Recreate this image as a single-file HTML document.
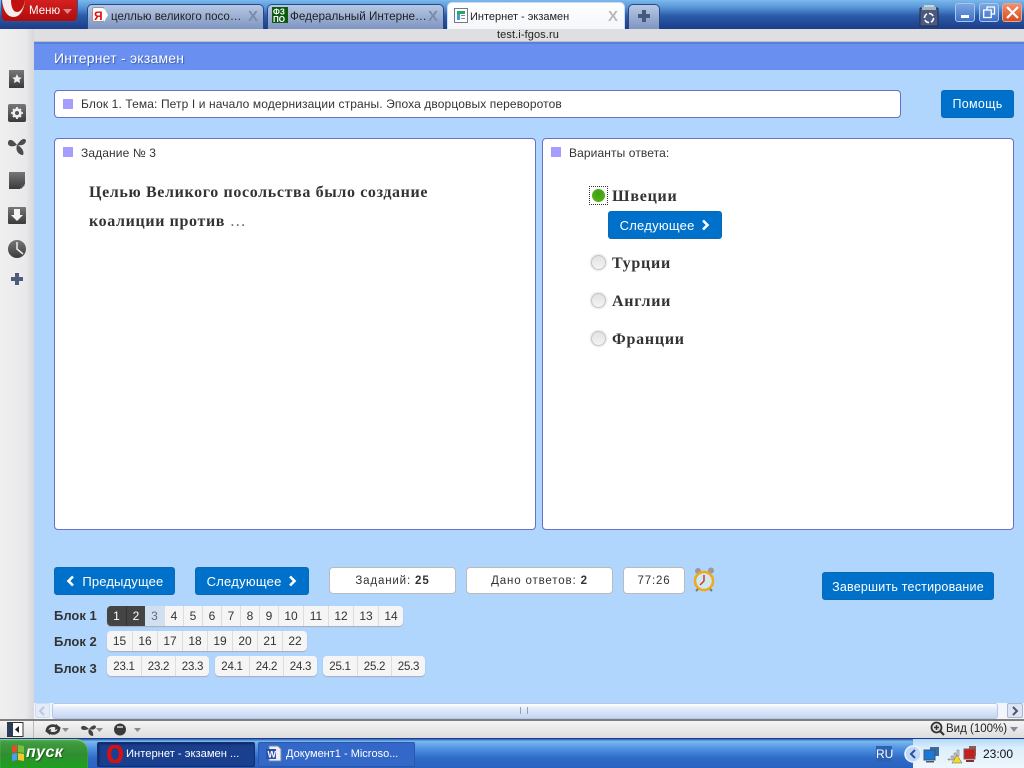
<!DOCTYPE html>
<html lang="ru"><head><meta charset="utf-8"><title>Интернет - экзамен</title>
<style>
*{box-sizing:border-box}
html,body{margin:0;padding:0;width:1024px;height:768px;overflow:hidden;background:#b0d6fe;font-family:"Liberation Sans",sans-serif;color:#333}
.a{position:absolute}
.t{position:absolute;white-space:nowrap}
.tab{position:absolute;top:4px;height:25px;border:1px solid #24488c;border-bottom:0;border-radius:5px 5px 0 0;background:linear-gradient(#b6c8e2,#7f95c2);font-size:12px;color:#222;line-height:24px}
.x{position:absolute;top:3px;font:bold 15px/18px "Liberation Sans",sans-serif;color:#7c8aa8}
.box{position:absolute;background:#fff;border:1px solid #6a6fc8;border-radius:4px}
.sq{position:absolute;width:10px;height:10px;background:#a59eff}
.lbl{position:absolute;font-size:12px;line-height:14px;color:#333;white-space:nowrap;letter-spacing:.11px}
.btn{position:absolute;background:#0071ca;border:1px solid #0a68b4;border-radius:3px;color:#fff;font-size:13px;text-align:center;white-space:nowrap;letter-spacing:.3px}
.info{position:absolute;top:567px;height:27px;background:#fff;border:1px solid #bbb;border-radius:4px;font-size:11.5px;line-height:26px;text-align:center;letter-spacing:.85px;color:#333}
.info b{letter-spacing:.9px}
.opt{position:absolute;font:bold 16px/20px "Liberation Serif",serif;color:#333;left:612px;white-space:nowrap;letter-spacing:.75px}
.rad{position:absolute;left:591px;width:15px;height:15px;border-radius:50%;background:linear-gradient(#e2e2e2,#f4f4f4);border:1px solid #c4c4c4;box-shadow:0 0 0 1.5px #efefef}
.pg{position:absolute;height:20px;display:flex;border-radius:4px;background:#f5f5f5;box-shadow:0 1px 1px #aab;overflow:hidden;font-size:12px;line-height:21px;text-align:center;color:#333}
.pg span{display:block;border-left:1px solid #ddd;flex:none}
.pg span:first-child{border-left:0}
.r3{font-size:11.5px;letter-spacing:-.25px;line-height:22px}
.bl{position:absolute;left:54px;font-size:13px;font-weight:bold;line-height:16px;color:#333;white-space:nowrap}
.win{position:absolute;top:3px;width:20px;height:19px;border:1px solid #a8c8ee;border-radius:3px;background:linear-gradient(#7da6e0,#3f70c8)}
</style></head><body>

<!-- top chrome -->
<div class="a" style="left:0;top:0;width:1024px;height:29px;background:linear-gradient(#7ab8ec 0,#5d9bdc 22%,#2a5ba8 55%,#1d3c88 100%)"></div>
<div class="a" style="left:1px;top:0;width:77px;height:22px;background:linear-gradient(#d42020,#b00c0c);border:1px solid #31528e;border-top:0;border-radius:0 0 5px 5px"></div>
<svg class="a" style="left:2px;top:0" width="26" height="18" viewBox="0 0 26 18"><path d="M0 0H23C22 10 18 17 11.500 17C5 17 1 10 0 0Z" fill="#f4eeee"/><path d="M9 0C9 7 11 12 15 12C19 12 22 7 23 0Z" fill="#c01010"/></svg>
<div class="t" style="left:29px;top:4px;font-size:11.5px;line-height:14px;color:#fff">Меню</div>
<svg class="a" style="left:63px;top:9px" width="10" height="6"><path d="M0 0H9L4.500 5Z" fill="#d88a8a"/></svg>

<div class="tab" style="left:87px;width:177px;font-size:11.5px"><span class="t" style="left:23px;top:0">целлью великого посо…</span><span class="x" style="left:160px">X</span></div>
<svg class="a" style="left:92px;top:7px" width="16" height="16"><rect x=".5" y=".5" width="12" height="14" rx="2" fill="#fff" stroke="#999"/><path d="M12 1L16 8L12 15Z" fill="#fff"/><text x="2" y="13" font-family="Liberation Sans" font-size="12" font-weight="bold" fill="#e01010">Я</text></svg>
<div class="tab" style="left:267px;width:177px;font-size:11.7px"><span class="t" style="left:22px;top:0">Федеральный Интерне…</span><span class="x" style="left:160px">X</span></div>
<svg class="a" style="left:272px;top:7px" width="16" height="16"><rect width="16" height="16" fill="#0c5a12"/><text x="1" y="7.500" font-family="Liberation Sans" font-size="8" font-weight="bold" fill="#fff">ФЗ</text><text x="1" y="15" font-family="Liberation Sans" font-size="8" font-weight="bold" fill="#fff">ПО</text></svg>
<div class="tab" style="left:447px;top:2px;width:178px;height:27px;background:linear-gradient(#fff,#f4f6fa);border-color:#d0dcef;font-size:11px"><span class="t" style="left:22px;top:2px">Интернет - экзамен</span><span class="x" style="left:160px;top:5px;color:#b8b8b8">X</span></div>
<svg class="a" style="left:454px;top:8px" width="14" height="15"><rect x=".5" y=".5" width="13" height="14" fill="#fff" stroke="#778"/><rect x="3" y="3" width="8" height="3" fill="#2aa860"/><rect x="3" y="6" width="3" height="6" fill="#3aa0d8"/><rect x="7" y="7" width="4" height="1" fill="#888"/><rect x="7" y="10" width="4" height="1" fill="#888"/></svg>
<div class="tab" style="left:628px;width:32px"></div>
<svg class="a" style="left:637px;top:9px" width="14" height="14"><path d="M5 1H9V5H13V9H9V13H5V9H1V5H5Z" fill="#465a80"/></svg>

<svg class="a" style="left:919px;top:4px" width="20" height="23"><path d="M5 1H15L16 6H5Z" fill="#b8e0d0"/><rect x="1" y="4" width="18" height="18" rx="1" fill="#4a5a80" stroke="#222c48"/><rect x="3" y="3" width="14" height="3" fill="#a8b0c0"/><circle cx="10" cy="14" r="4.500" fill="none" stroke="#fff" stroke-width="1.600" stroke-dasharray="5 2"/></svg>
<div class="win" style="left:955px"><div class="a" style="left:5px;top:11px;width:8px;height:3px;background:#fff"></div></div>
<div class="win" style="left:979px"><svg class="a" style="left:3px;top:2px" width="13" height="13" fill="none" stroke="#fff" stroke-width="1.300"><rect x=".7" y="4" width="7.500" height="7.500"/><path d="M4 4V1H11.500V8H8.500"/></svg></div>
<div class="win" style="left:1002px;width:20px;border-color:#e8a890;background:linear-gradient(#ee9070,#d84c20)"><svg class="a" style="left:3px;top:2px" width="13" height="13"><path d="M1 1L12 12M12 1L1 12" stroke="#fff" stroke-width="2.200"/></svg></div>

<!-- sidebar -->
<div class="a" style="left:0;top:29px;width:34px;height:691px;background:linear-gradient(90deg,#efeff0 0,#e9e9eb 75%,#d8d8da 100%)"></div>
<svg class="a" style="left:0;top:65px" width="34" height="225" viewBox="0 0 34 225">
<defs><linearGradient id="g" x1="0" y1="0" x2="0" y2="1"><stop offset="0" stop-color="#777"/><stop offset="1" stop-color="#3a3a3a"/></linearGradient></defs>
<rect x="9" y="5" width="15" height="18" fill="url(#g)"/><path d="M17 9l1.500 3.200 3.300.4-2.400 2.200.7 3.300-3.100-1.700-3.100 1.700.7-3.300-2.400-2.200 3.300-.4z" fill="#eee"/>
<rect x="8" y="39" width="18" height="18" rx="2" fill="url(#g)"/><circle cx="17" cy="48" r="3.500" fill="none" stroke="#eee" stroke-width="2.500"/><path d="M17 42V54M11 48H23M13 44L21 52M21 44L13 52" stroke="#eee" stroke-width="1.800"/><circle cx="17" cy="48" r="2" fill="#555"/>
<path d="M17 80C11 72 8 75 8 78C8 82 13 82 17 80ZM17 80C23 71 26 74 26 76C25 80 21 81 17 80ZM17 80C15 86 19 90 23 90C25 87 21 81 17 80Z" fill="#4c4c4c"/>
<path d="M9 107H25V119L20 124H9Z" fill="url(#g)"/><path d="M21 120H25L21 124Z" fill="#555"/>
<rect x="8" y="142" width="18" height="17" rx="1" fill="url(#g)"/><path d="M14 144H20V150H23L17 156L11 150H14Z" fill="#f2f2f2"/>
<circle cx="17" cy="184" r="9" fill="url(#g)"/><path d="M17 177V184L23 189" stroke="#eee" stroke-width="1.500" fill="none"/>
<path d="M15 208H19V212H23V216H19V220H15V216H11V212H15Z" fill="#4e5c7c"/>
</svg>

<!-- address strip -->
<div class="a" style="left:34px;top:29px;width:990px;height:13px;background:#dfdfe1;border-bottom:1px solid #bfc0c4"></div>
<div class="t" style="left:497px;top:29px;font-size:11px;line-height:12px;color:#222;letter-spacing:.1px">test.i-fgos.ru</div>
<!-- page header -->
<div class="a" style="left:34px;top:42px;width:990px;height:28px;background:#6990f0;border-top:2px solid #5a80de"></div>
<div class="t" style="left:54px;top:50px;font-size:14px;line-height:16px;color:#fff;letter-spacing:.22px;text-shadow:1px 1px 1px #3a5cb0">Интернет - экзамен</div>
<!-- body -->
<div class="a" style="left:34px;top:70px;width:990px;height:650px;background:#b0d6fe"></div>

<div class="box" style="left:54px;top:90px;width:847px;height:28px"></div>
<div class="sq" style="left:63px;top:99px"></div>
<div class="lbl" style="left:81px;top:97px">Блок 1. Тема: Петр I и начало модернизации страны. Эпоха дворцовых переворотов</div>
<div class="btn" style="left:941px;top:90px;width:73px;height:28px;line-height:27px;font-size:12.500px">Помощь</div>

<div class="box" style="left:54px;top:138px;width:482px;height:392px"></div>
<div class="sq" style="left:63px;top:147px"></div>
<div class="lbl" style="left:81px;top:146px">Задание № 3</div>
<div class="t" style="left:89px;top:178px;width:400px;font:bold 16px/29px 'Liberation Serif',serif;color:#333;letter-spacing:.63px">Целью Великого посольства было создание<br>коалиции против <span style="font-weight:normal;color:#666">…</span></div>

<div class="box" style="left:542px;top:138px;width:472px;height:392px"></div>
<div class="sq" style="left:551px;top:147px"></div>
<div class="lbl" style="left:569px;top:146px">Варианты ответа:</div>

<div class="a" style="left:589px;top:186px;width:19px;height:19px;border:1px dotted #333"></div>
<div class="a" style="left:592px;top:189px;width:13px;height:13px;border-radius:50%;background:radial-gradient(circle at 50% 35%,#3aa010,#5fb820)"></div>
<div class="opt" style="top:187px">Швеции</div>
<div class="btn" style="left:608px;top:211px;width:114px;height:28px;line-height:28px;letter-spacing:.25px">Следующее <svg width="9" height="12" viewBox="0 0 9 12" style="margin-left:3px;vertical-align:-1px"><path d="M2 1.500L6.500 6L2 10.500" fill="none" stroke="#fff" stroke-width="2.600"/></svg></div>
<div class="rad" style="top:255px"></div><div class="opt" style="top:254px">Турции</div>
<div class="rad" style="top:293px"></div><div class="opt" style="top:292px">Англии</div>
<div class="rad" style="top:331px"></div><div class="opt" style="top:330px">Франции</div>

<!-- bottom controls -->
<div class="btn" style="left:54px;top:567px;width:121px;height:28px;line-height:28px;letter-spacing:.15px"><svg width="9" height="12" viewBox="0 0 9 12" style="margin-right:4px;vertical-align:-1px"><path d="M7 1.500L2.500 6L7 10.500" fill="none" stroke="#fff" stroke-width="2.600"/></svg> Предыдущее</div>
<div class="btn" style="left:195px;top:567px;width:114px;height:28px;line-height:28px;letter-spacing:.25px">Следующее <svg width="9" height="12" viewBox="0 0 9 12" style="margin-left:3px;vertical-align:-1px"><path d="M2 1.500L6.500 6L2 10.500" fill="none" stroke="#fff" stroke-width="2.600"/></svg></div>
<div class="info" style="left:329px;width:127px">Заданий: <b>25</b></div>
<div class="info" style="left:466px;width:147px">Дано ответов: <b>2</b></div>
<div class="info" style="left:623px;width:62px">77:26</div>
<svg class="a" style="left:693px;top:567px" width="23" height="25" viewBox="0 0 23 25"><circle cx="5" cy="4" r="3" fill="#9a9a9a"/><circle cx="18" cy="3.500" r="3" fill="#9a9a9a"/><circle cx="11" cy="14" r="9" fill="#cdeaf4" stroke="#f4a818" stroke-width="2.600"/><path d="M11 8V14L7 18" stroke="#d03018" stroke-width="1.400" fill="none"/><path d="M5 22L3 24M17 22L19 24" stroke="#777" stroke-width="2"/></svg>
<div class="btn" style="left:822px;top:572px;width:172px;height:28px;line-height:28px;font-size:12.500px;letter-spacing:.2px">Завершить тестирование</div>

<div class="bl" style="top:608px">Блок 1</div>
<div class="bl" style="top:634px">Блок 2</div>
<div class="bl" style="top:661px">Блок 3</div>

<div class="pg" style="left:107px;top:606px">
<span style="width:19px;background:#444;color:#fff;border-color:#444">1</span><span style="width:19px;background:#444;color:#fff;border-color:#333">2</span><span style="width:19px;background:#d0e0f0;color:#667;border:0">3</span><span style="width:19px">4</span><span style="width:19px">5</span><span style="width:19px">6</span><span style="width:19px">7</span><span style="width:19px">8</span><span style="width:19px">9</span><span style="width:25px">10</span><span style="width:25px">11</span><span style="width:25px">12</span><span style="width:25px">13</span><span style="width:25px">14</span></div>
<div class="pg" style="left:107px;top:631px">
<span style="width:25px">15</span><span style="width:25px">16</span><span style="width:25px">17</span><span style="width:25px">18</span><span style="width:25px">19</span><span style="width:25px">20</span><span style="width:25px">21</span><span style="width:25px">22</span></div>
<div class="pg r3" style="left:107px;top:656px"><span style="width:34px">23.1</span><span style="width:34px">23.2</span><span style="width:34px">23.3</span></div>
<div class="pg r3" style="left:215px;top:656px"><span style="width:34px">24.1</span><span style="width:34px">24.2</span><span style="width:34px">24.3</span></div>
<div class="pg r3" style="left:323px;top:656px"><span style="width:34px">25.1</span><span style="width:34px">25.2</span><span style="width:34px">25.3</span></div>

<!-- scrollbar -->
<div class="a" style="left:34px;top:703px;width:990px;height:17px;background:#f2f6fc"></div>
<div class="a" style="left:35px;top:703px;width:15px;height:15px;background:#e4ecfa;border:1px solid #d0dcf0;border-radius:2px"></div>
<svg class="a" style="left:38px;top:706px" width="9" height="10"><path d="M6 1L2 5L6 9" fill="none" stroke="#c0c8d8" stroke-width="2"/></svg>
<div class="a" style="left:52px;top:703px;width:946px;height:16px;background:linear-gradient(#fff,#e4ecfa 30%,#c4d6f4 100%);border:1px solid #b4c8e8;border-radius:3px"></div>
<div class="t" style="left:520px;top:707px;width:8px;height:7px;border-left:1px solid #8aa;border-right:1px solid #8aa"></div>
<div class="a" style="left:1007px;top:703px;width:16px;height:15px;background:#dbe5f5;border:1px solid #a8b8d0;border-radius:2px"></div>
<svg class="a" style="left:1011px;top:706px" width="9" height="10"><path d="M2 1L6 5L2 9" fill="none" stroke="#556" stroke-width="2"/></svg>

<!-- status bar -->
<div class="a" style="left:0;top:719px;width:1024px;height:20px;background:linear-gradient(#f4f4f4,#dcdcdc);border-top:2px solid #7e7e7e"></div>
<div class="a" style="left:33px;top:721px;width:1px;height:17px;background:#bbb"></div>
<svg class="a" style="left:7px;top:722px" width="17" height="15"><rect width="16" height="14" y=".5" fill="#fff" stroke="#333"/><rect y="1" width="6" height="13" fill="#2c3c58"/><path d="M12 4L8 7.500L12 11Z" fill="#222"/></svg>
<svg class="a" style="left:44px;top:722px" width="100" height="15" viewBox="0 0 100 15">
<path d="M3 9C3 4 9 2 13 5M15 6C15 11 9 13 5 10" fill="none" stroke="#3a3a3a" stroke-width="2.600"/><path d="M12 2L17 6L11 8ZM6 13L1 9L7 7Z" fill="#3a3a3a"/><path d="M18 6H25L21.500 10Z" fill="#889"/>
<path d="M45 7C40 2 37 4 37 6C38 9 42 8 45 7ZM45 7C49 2 52 3 52 5C51 8 48 8 45 7ZM45 7C43 11 46 14 49 14C50 11 48 8 45 7Z" fill="#444"/><path d="M52 6H59L55.500 10Z" fill="#889"/>
<circle cx="76" cy="7.500" r="6" fill="#3a3a3a"/><path d="M73 5H79" stroke="#ddd" stroke-width="1.500"/><path d="M90 6H97L93.500 10Z" fill="#889"/>
</svg>
<svg class="a" style="left:930px;top:721px" width="15" height="16"><circle cx="6.500" cy="6.500" r="5" fill="#ddd" stroke="#333" stroke-width="1.800"/><path d="M4 6.500H9M6.500 4V9" stroke="#333" stroke-width="1.400"/><path d="M10 10L14 14" stroke="#333" stroke-width="2.200"/></svg>
<div class="t" style="left:946px;top:722px;font-size:11.500px;line-height:14px;color:#222">Вид (100%)</div>
<svg class="a" style="left:1010px;top:727px" width="9" height="6"><path d="M0 0H8L4 5Z" fill="#889"/></svg>

<!-- taskbar -->
<div class="a" style="left:0;top:738px;width:1024px;height:30px;background:linear-gradient(#2c5cb8 0,#78b8ee 8%,#4c90e0 35%,#2f6cc8 65%,#2a62c0 100%);border-top:1px solid #1a3c8a"></div>
<div class="a" style="left:913px;top:739px;width:111px;height:29px;background:linear-gradient(#b0d8f8,#dceefc 30%,#eef7fd 100%)"></div>
<div class="a" style="left:0;top:739px;width:88px;height:29px;background:linear-gradient(#4aa84a 0,#3c9a3c 18%,#2f8e2f 55%,#1fa01f 100%);border-radius:0 12px 0 0;box-shadow:inset 0 1px 1px #9ad09a"></div>
<svg class="a" style="left:11px;top:744px" width="14" height="18"><path d="M1 2L6 1V8L1 9Z" fill="#e84c28"/><path d="M7 1L13 2V9L7 8Z" fill="#7ac040"/><path d="M1 10L6 9V16L1 17Z" fill="#4c9cf0"/><path d="M7 9L13 10V17L7 16Z" fill="#f8c828"/></svg>
<div class="t" style="left:26px;top:744px;font:italic bold 16px/18px 'Liberation Sans',sans-serif;color:#fff;letter-spacing:.4px;text-shadow:1px 1px 1px #1a5a1a">пуск</div>
<div class="a" style="left:97px;top:742px;width:158px;height:25px;background:#1a3f8f;border:1px solid #153070;border-radius:2px;box-shadow:inset 1px 1px 2px #0e2460"></div>
<svg class="a" style="left:107px;top:745px" width="16" height="18"><ellipse cx="8" cy="9" rx="6" ry="8" fill="none" stroke="#d81010" stroke-width="4"/></svg>
<div class="t" style="left:126px;top:747px;font-size:11.200px;line-height:14px;color:#fff">Интернет - экзамен ...</div>
<div class="a" style="left:258px;top:742px;width:157px;height:25px;background:#3468c8;border:1px solid #2a56ac;border-radius:2px"></div>
<svg class="a" style="left:266px;top:745px" width="16" height="18"><path d="M3 1H12L15 4V16H3Z" fill="#eef" stroke="#789"/><rect y="4" width="10" height="10" fill="#2a50a8"/><text x="1.500" y="12.500" font-family="Liberation Sans" font-size="9" font-weight="bold" fill="#fff">W</text></svg>
<div class="t" style="left:286px;top:747px;font-size:11px;line-height:14px;color:#fff">Документ1 - Microso...</div>
<div class="a" style="left:876px;top:746px;width:16px;height:16px;background:#2c62b4"></div>
<div class="t" style="left:876px;top:747px;font-size:12px;line-height:14px;color:#fff">RU</div>
<svg class="a" style="left:904px;top:745px" width="72" height="20" viewBox="0 0 72 20">
<circle cx="9" cy="9" r="8" fill="#c0d8f4" stroke="#e8f2ff" stroke-width="1.500"/><path d="M11 5L7 9L11 13" fill="none" stroke="#2850a0" stroke-width="2"/>
<rect x="26" y="2" width="9" height="9" fill="#3c6ca8"/><rect x="20" y="5" width="11" height="10" fill="#1c78d8" stroke="#456"/><rect x="22" y="16" width="8" height="1.500" fill="#556"/>
<path d="M44 15V14H46V15ZM47 15V11H49V15ZM50 15V8H52V15ZM53 15V5H55V11H53Z" fill="#d8d8d8" stroke="#666" stroke-width=".5"/><path d="M53 10L58 18H48Z" fill="#f8d820" stroke="#664" stroke-width=".5"/>
<rect x="65" y="1" width="7" height="10" fill="#8a6050"/><rect x="60" y="4" width="11" height="10" fill="#c02020" stroke="#855"/><rect x="62" y="15" width="8" height="2" fill="#733"/>
</svg>
<div class="t" style="left:983px;top:747px;font-size:12px;line-height:14px;color:#111">23:00</div>

</body></html>
